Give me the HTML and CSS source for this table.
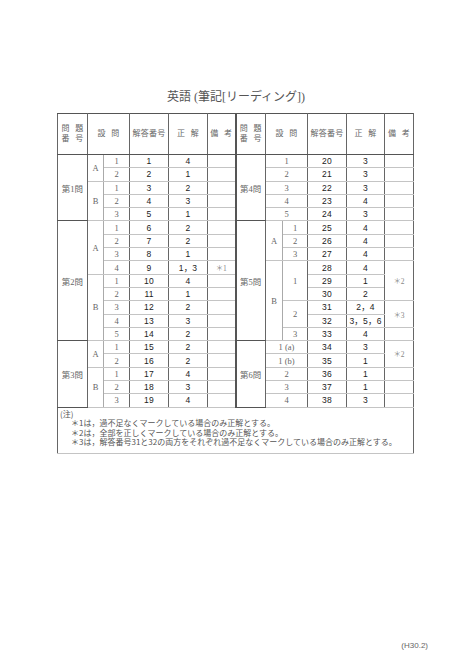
FILE: index.html
```html
<!DOCTYPE html>
<html lang="ja">
<head>
<meta charset="utf-8">
<title>英語（筆記[リーディング]）</title>
<link rel="stylesheet" href="styles.css">
</head>
<body>
<div class="page">
  <h1 class="title">英語 (筆記[リーディング])</h1>
  <table class="sheet">
    <colgroup>
      <col class="c-q"><col class="c-ab"><col class="c-no"><col class="c-ans"><col class="c-key"><col class="c-rem">
      <col class="c-q"><col class="c-ab2"><col class="c-no2"><col class="c-ans"><col class="c-key2"><col class="c-rem2">
    </colgroup>
    <thead>
      <tr class="head">
        <th class="q"><span class="wide">問 題</span><br><span class="wide">番 号</span></th>
        <th colspan="2"><span class="wide">設 問</span></th>
        <th>解答番号</th>
        <th><span class="wide">正 解</span></th>
        <th class="rem"><span class="wide">備 考</span></th>
        <th class="q mid"><span class="wide">問 題</span><br><span class="wide">番 号</span></th>
        <th colspan="2"><span class="wide">設 問</span></th>
        <th>解答番号</th>
        <th><span class="wide">正 解</span></th>
        <th class="rem"><span class="wide">備 考</span></th>
      </tr>
    </thead>
    <tbody>
      <tr class="grp">
        <td rowspan="5" class="q">第1問</td><td rowspan="2" class="ab">A</td><td class="no">1</td><td class="g">1</td><td class="g">4</td><td></td>
        <td rowspan="5" class="q mid">第4問</td><td colspan="2" class="no">1</td><td class="g">20</td><td class="g">3</td><td></td>
      </tr>
      <tr>
        <td class="no">2</td><td class="g">2</td><td class="g">1</td><td></td>
        <td colspan="2" class="no">2</td><td class="g">21</td><td class="g">3</td><td></td>
      </tr>
      <tr>
        <td rowspan="3" class="ab">B</td><td class="no">1</td><td class="g">3</td><td class="g">2</td><td></td>
        <td colspan="2" class="no">3</td><td class="g">22</td><td class="g">3</td><td></td>
      </tr>
      <tr>
        <td class="no">2</td><td class="g">4</td><td class="g">3</td><td></td>
        <td colspan="2" class="no">4</td><td class="g">23</td><td class="g">4</td><td></td>
      </tr>
      <tr>
        <td class="no">3</td><td class="g">5</td><td class="g">1</td><td></td>
        <td colspan="2" class="no">5</td><td class="g">24</td><td class="g">3</td><td></td>
      </tr>

      <tr class="grp">
        <td rowspan="9" class="q">第2問</td><td rowspan="4" class="ab">A</td><td class="no">1</td><td class="g">6</td><td class="g">2</td><td></td>
        <td rowspan="9" class="q mid">第5問</td><td rowspan="3" class="ab">A</td><td class="no">1</td><td class="g">25</td><td class="g">4</td><td></td>
      </tr>
      <tr>
        <td class="no">2</td><td class="g">7</td><td class="g">2</td><td></td>
        <td class="no">2</td><td class="g">26</td><td class="g">4</td><td></td>
      </tr>
      <tr>
        <td class="no">3</td><td class="g">8</td><td class="g">1</td><td></td>
        <td class="no">3</td><td class="g">27</td><td class="g">4</td><td></td>
      </tr>
      <tr>
        <td class="no">4</td><td class="g">9</td><td class="g">1，3</td><td class="note">＊1</td>
        <td rowspan="6" class="ab">B</td><td rowspan="3" class="no">1</td><td class="g">28</td><td class="g">4</td><td rowspan="3" class="note">＊2</td>
      </tr>
      <tr>
        <td rowspan="5" class="ab">B</td><td class="no">1</td><td class="g">10</td><td class="g">4</td><td></td>
        <td class="g">29</td><td class="g">1</td>
      </tr>
      <tr>
        <td class="no">2</td><td class="g">11</td><td class="g">1</td><td></td>
        <td class="g">30</td><td class="g">2</td>
      </tr>
      <tr>
        <td class="no">3</td><td class="g">12</td><td class="g">2</td><td></td>
        <td rowspan="2" class="no">2</td><td class="g">31</td><td class="g">2，4</td><td rowspan="2" class="note">＊3</td>
      </tr>
      <tr>
        <td class="no">4</td><td class="g">13</td><td class="g">3</td><td></td>
        <td class="g">32</td><td class="g">3，5，6</td>
      </tr>
      <tr>
        <td class="no">5</td><td class="g">14</td><td class="g">2</td><td></td>
        <td class="no">3</td><td class="g">33</td><td class="g">4</td><td></td>
      </tr>

      <tr class="grp">
        <td rowspan="5" class="q">第3問</td><td rowspan="2" class="ab">A</td><td class="no">1</td><td class="g">15</td><td class="g">2</td><td></td>
        <td rowspan="5" class="q mid">第6問</td><td colspan="2" class="no">1 (a)</td><td class="g">34</td><td class="g">3</td><td rowspan="2" class="note">＊2</td>
      </tr>
      <tr>
        <td class="no">2</td><td class="g">16</td><td class="g">2</td><td></td>
        <td colspan="2" class="no">1 (b)</td><td class="g">35</td><td class="g">1</td>
      </tr>
      <tr>
        <td rowspan="3" class="ab">B</td><td class="no">1</td><td class="g">17</td><td class="g">4</td><td></td>
        <td colspan="2" class="no">2</td><td class="g">36</td><td class="g">1</td><td></td>
      </tr>
      <tr>
        <td class="no">2</td><td class="g">18</td><td class="g">3</td><td></td>
        <td colspan="2" class="no">3</td><td class="g">37</td><td class="g">1</td><td></td>
      </tr>
      <tr>
        <td class="no">3</td><td class="g">19</td><td class="g">4</td><td></td>
        <td colspan="2" class="no">4</td><td class="g">38</td><td class="g">3</td><td></td>
      </tr>

      <tr class="notes-row">
        <td colspan="12" class="notes">
          <p class="notes-head">(注)</p>
          <p class="notes-line">＊1は，過不足なくマークしている場合のみ正解とする。</p>
          <p class="notes-line">＊2は，全部を正しくマークしている場合のみ正解とする。</p>
          <p class="notes-line">＊3は，解答番号31と32の両方をそれぞれ過不足なくマークしている場合のみ正解とする。</p>
        </td>
      </tr>
    </tbody>
  </table>
  <div class="code">(H30.2)</div>
</div>
</body>
</html>
```

FILE: styles.css
```css
html, body {
  margin: 0;
  padding: 0;
  background: #fff;
}

.page {
  width: 474px;
  height: 670px;
  display: flex;
  flex-direction: column;
  box-sizing: border-box;
  padding-top: 89px;
  font-family: "Liberation Serif", "Noto Sans CJK JP", serif;
  color: #555;
}

.title {
  margin: 0;
  height: 16px;
  line-height: 16px;
  font-size: 12px;
  font-weight: normal;
  text-align: center;
  color: #555;
  padding-right: 2px;
}

.sheet {
  margin: 8px 0 0 57px;
  width: 356px;
  border-collapse: collapse;
  table-layout: fixed;
  border: 1.5px solid #555;
}

.c-q { width: 30px; }
.c-ab { width: 16px; }
.c-no { width: 26px; }
.c-ans { width: 39px; }
.c-key { width: 39px; }
.c-rem { width: 28px; }
.c-ab2 { width: 17px; }
.c-no2 { width: 25px; }
.c-key2 { width: 38px; }
.c-rem2 { width: 29px; }

.sheet th,
.sheet td {
  padding: 0;
  text-align: center;
  vertical-align: middle;
  border-left: 1px solid #666;
  border-right: 1px solid #666;
  border-top: 1px solid #c4c4c4;
  border-bottom: 1px solid #c4c4c4;
  font-weight: normal;
  overflow: hidden;
  white-space: nowrap;
}

.head th {
  height: 40px;
  font-size: 8px;
  line-height: 10px;
  color: #666;
  letter-spacing: 0.3px;
  border-bottom: 1.5px solid #555;
  border-top: 1.5px solid #555;
}

.head .wide {
  word-spacing: 3px;
}

.sheet tbody tr {
  height: 13.3px;
}

.sheet .grp td {
  border-top: 1.5px solid #555;
}

.sheet td.q {
  font-size: 8.5px;
  color: #666;
  border-bottom: 1.5px solid #555;
}

.sheet td.ab {
  font-size: 8.5px;
  color: #666;
  border-right: 1px solid #aaa;
}

.sheet td.no {
  font-size: 8.5px;
  line-height: 12px;
  color: #666;
}

.sheet .mid {
  border-left: 2px solid #555;
}

.sheet td.g {
  font-family: "Liberation Sans", "Noto Sans CJK JP", sans-serif;
  font-size: 8.5px;
  line-height: 12px;
  color: #222;
  letter-spacing: 0.2px;
}

.sheet td.note {
  font-size: 7.5px;
  color: #888;
}

.notes-row td.notes {
  height: 44px;
  text-align: left;
  vertical-align: top;
  border-top: 1.5px solid #555;
  padding: 1px 0 0 2px;
  font-family: "Noto Sans CJK JP", sans-serif;
  color: #555;
}

.notes p {
  margin: 0;
  font-size: 8px;
  line-height: 9.6px;
}

.notes .notes-line {
  padding-left: 11px;
}

.code {
  margin-top: auto;
  margin-bottom: 20px;
  align-self: flex-end;
  margin-right: 46px;
  font-family: "Liberation Sans", sans-serif;
  font-size: 8px;
  color: #666;
}
```
